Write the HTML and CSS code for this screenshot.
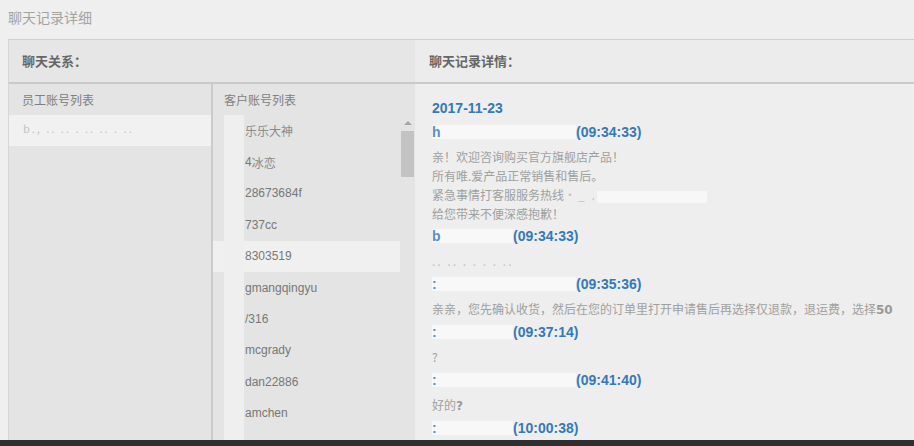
FILE: index.html
```html
<!DOCTYPE html>
<html lang="zh-CN">
<head>
<meta charset="utf-8">
<title>聊天记录详细</title>
<link rel="stylesheet" href="styles.css">
</head>
<body>
<div class="page">
  <div class="title">聊天记录详细</div>
  <div class="box">
    <section class="left">
      <div class="panel-head">聊天关系：</div>
      <div class="cols">
        <div class="col staff">
          <div class="col-head">员工账号列表</div>
          <div class="staff-row active"><span class="faint">b., .. ..  . .. ..  . ..</span></div>
        </div>
        <div class="col customers">
          <div class="col-head">客户账号列表</div>
          <div class="list">
            <div class="item"><span class="redact"></span><span class="cn">乐乐大神</span></div>
            <div class="item"><span class="redact"></span>4<span class="cn">冰恋</span></div>
            <div class="item"><span class="redact"></span>28673684f</div>
            <div class="item"><span class="redact"></span>737cc</div>
            <div class="item selected"><span class="redact"></span>8303519</div>
            <div class="item"><span class="redact"></span>gmangqingyu</div>
            <div class="item"><span class="redact"></span>/316</div>
            <div class="item"><span class="redact"></span>mcgrady</div>
            <div class="item"><span class="redact"></span>dan22886</div>
            <div class="item"><span class="redact"></span>amchen</div>
            <div class="item"><span class="redact"></span>2005</div>
            <div class="scrollbar">
              <span class="arrow"></span>
              <span class="thumb"></span>
            </div>
          </div>
        </div>
      </div>
    </section>
    <section class="right">
      <div class="panel-head">聊天记录详情：</div>
      <div class="chat">
        <div class="date">2017-11-23</div>
        <div class="name"><span class="mask long"><i>h</i></span>(09:34:33)</div>
        <div class="msg multi">亲！欢迎咨询购买官方旗舰店产品！<br>所有唯.爱产品正常销售和售后。<br>紧急事情打客服服务热线<span class="faint">·_ .</span><span class="hide"></span><br>给您带来不便深感抱歉！</div>
        <div class="name"><span class="mask short"><i>b</i></span>(09:34:33)</div>
        <div class="msg"><span class="faint">.. .. . . .  . ..</span></div>
        <div class="name"><span class="mask long"><i>:</i></span>(09:35:36)</div>
        <div class="msg">亲亲，您先确认收货，然后在您的订单里打开申请售后再选择仅退款，退运费，选择<b>50</b></div>
        <div class="name"><span class="mask short"><i>:</i></span>(09:37:14)</div>
        <div class="msg">?</div>
        <div class="name"><span class="mask long"><i>:</i></span>(09:41:40)</div>
        <div class="msg">好的<b>?</b></div>
        <div class="name"><span class="mask short"><i>:</i></span>(10:00:38)</div>
      </div>
    </section>
  </div>
</div>
<div class="taskbar"></div>
</body>
</html>
```

FILE: styles.css
```css
* { box-sizing: border-box; }

html, body {
  margin: 0;
  padding: 0;
  height: 446px;
  overflow: hidden;
  background: #efefef;
  font-family: "Noto Sans CJK SC", "DejaVu Sans", sans-serif;
}

.page {
  height: 440px;
  overflow: hidden;
}

.title {
  height: 39px;
  padding: 7px 0 0 8px;
  font-size: 14px;
  line-height: 20px;
  color: #a3a3a3;
}

.box {
  margin-left: 8px;
  display: grid;
  grid-template-columns: 406px 1fr;
  border-top: 1px solid #d0d0d0;
  border-left: 1px solid #d6d6d6;
  height: 401px;
}

.panel-head {
  height: 44px;
  padding-left: 13px;
  font-size: 13px;
  font-weight: bold;
  line-height: 42px;
  color: #666;
  border-bottom: 2px solid #cacaca;
}

.left {
  background: #e4e4e4;
  display: flex;
  flex-direction: column;
  min-height: 0;
}

.left .panel-head {
  background: #e6e6e6;
}

.cols {
  flex: 1;
  display: grid;
  grid-template-columns: 204px 1fr;
  min-height: 0;
}

.col-head {
  height: 31px;
  line-height: 31px;
  font-size: 12px;
  color: #808080;
  padding-left: 13px;
}

.staff {
  border-right: 2px solid #cbcbcb;
}

.staff-row {
  height: 31px;
  line-height: 27px;
  padding-left: 14px;
  font-size: 11px;
  background: #f1f1f1;
}

.faint {
  color: #c4c4c4;
  letter-spacing: 2px;
}

.customers .col-head {
  padding-left: 11px;
}

.list {
  position: relative;
  padding-right: 15px;
}

.item {
  height: 31.4px;
  display: flex;
  align-items: center;
  font-family: "Liberation Sans", "Noto Sans CJK SC", sans-serif;
  font-size: 12px;
  color: #777;
  padding-left: 11px;
}

.item .cn {
  font-family: "Noto Sans CJK SC", sans-serif;
  color: #8a8a8a;
}

.item.selected {
  background: #f0f0f0;
}

.redact {
  align-self: stretch;
  width: 20px;
  margin-right: 1px;
  background: #efefef;
}

.scrollbar {
  position: absolute;
  top: 0;
  right: 1px;
  width: 14px;
  height: 100%;
}

.arrow {
  position: absolute;
  top: 6px;
  left: 4px;
  width: 0;
  height: 0;
  border-left: 4px solid transparent;
  border-right: 4px solid transparent;
  border-bottom: 4px solid #a5a5a5;
}

.thumb {
  position: absolute;
  top: 16px;
  left: 1px;
  width: 13px;
  height: 46px;
  background: #c3c3c3;
}

.right {
  background: #eeeeee;
  display: flex;
  flex-direction: column;
  min-width: 0;
}

.right .panel-head {
  padding-left: 14px;
  background: #ececec;
}

.chat {
  padding: 12px 0 0 17px;
}

.date,
.name {
  height: 24px;
  display: flex;
  align-items: center;
  font-family: "Liberation Sans", sans-serif;
  font-weight: bold;
  font-size: 14px;
  color: #3579b9;
  white-space: nowrap;
}

.mask {
  display: inline-block;
  width: 144px;
  height: 14px;
  background: #f8f8f8;
  line-height: 14px;
}

.mask i {
  font-style: normal;
  color: #5b8fc4;
}

.mask.long { width: 144px; }
.mask.short { width: 81px; }

.msg {
  height: 24px;
  padding-top: 3px;
  font-size: 12px;
  line-height: 19px;
  color: #a0a0a0;
  white-space: nowrap;
}

.msg.multi {
  height: 80px;
}

.msg b {
  font-family: "DejaVu Sans", sans-serif;
  font-weight: bold;
  font-size: 12px;
  line-height: 1;
  color: #999;
}

.hide {
  display: inline-block;
  width: 110px;
  height: 12px;
  vertical-align: middle;
  background: #f7f7f7;
}

.taskbar {
  height: 6px;
  background: #2f2f2f;
}
```
